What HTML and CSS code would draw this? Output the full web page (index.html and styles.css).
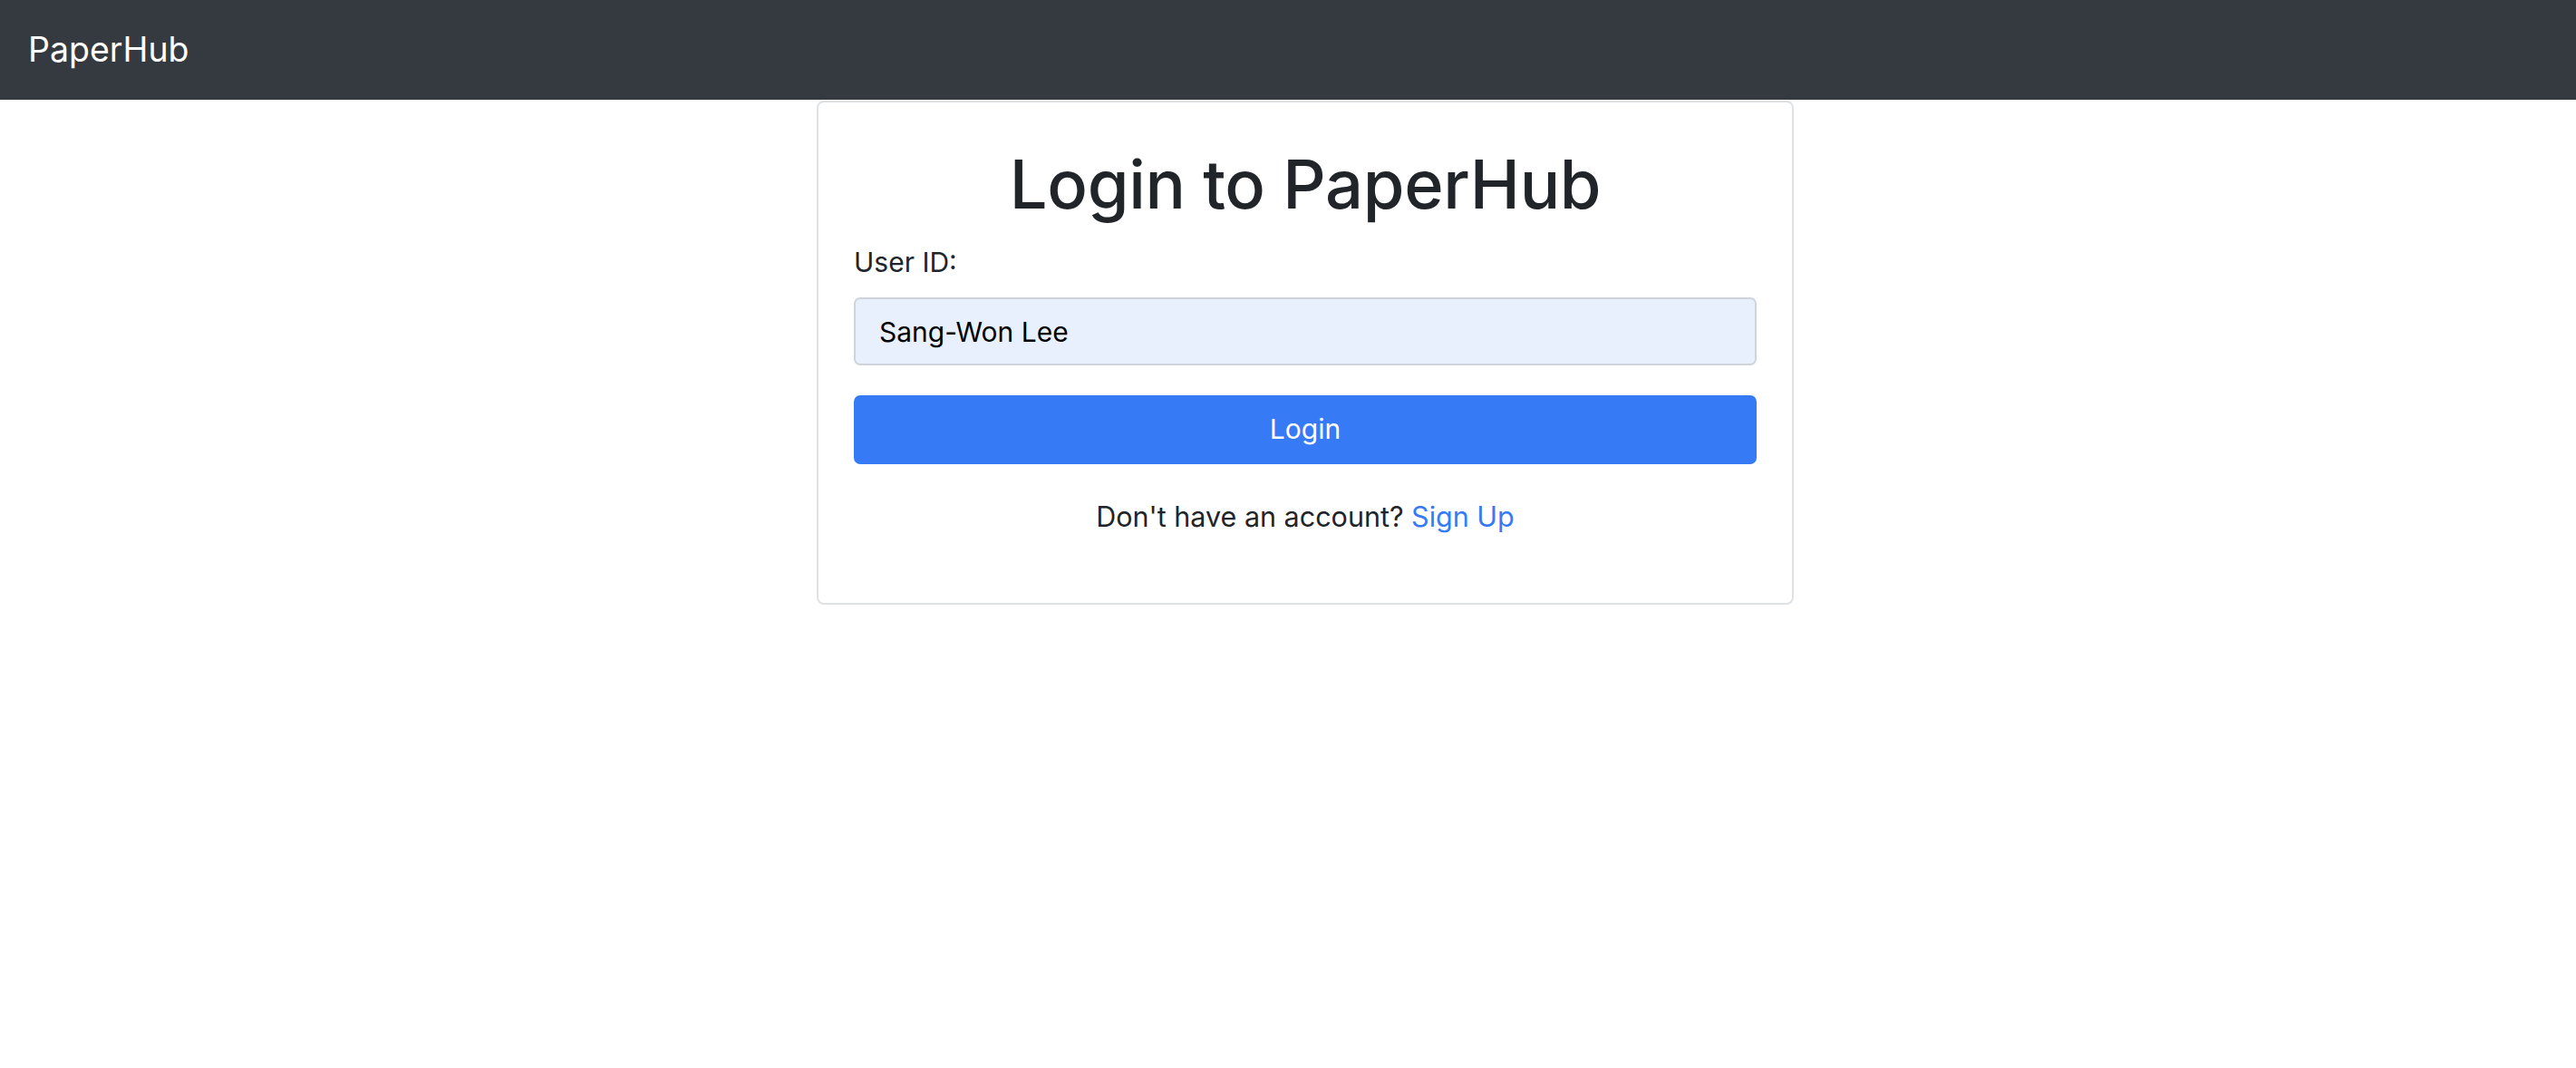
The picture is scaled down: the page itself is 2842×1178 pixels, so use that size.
FILE: index.html
```html
<!DOCTYPE html>
<html lang="en">
<head>
<meta charset="utf-8">
<title>Login - PaperHub</title>
<link rel="stylesheet" href="styles.css">
</head>
<body>
  <nav class="navbar">
    <a class="brand" href="#">PaperHub</a>
  </nav>
  <main class="page">
    <section class="card">
      <h1 class="title">Login to PaperHub</h1>
      <form class="form">
        <label class="label" for="uid">User ID:</label>
        <input class="input" id="uid" type="text" value="Sang-Won Lee">
        <button class="btn" type="button">Login</button>
      </form>
      <p class="signup">Don't have an account? <a class="link" href="#">Sign Up</a></p>
    </section>
  </main>
</body>
</html>
```

FILE: styles.css
```css
* { box-sizing: border-box; }

html, body {
  margin: 0;
  padding: 0;
  background: #ffffff;
}

body {
  font-family: Inter, "Noto Sans", "Liberation Sans", sans-serif;
  color: #212529;
  font-size: 30px;
  line-height: 1.5;
}

.navbar {
  height: 110px;
  background: #343a40;
  display: flex;
  align-items: center;
  padding-left: 31px;
}

.brand {
  color: #ffffff;
  text-decoration: none;
  font-size: 37.5px;
  line-height: 1.5;
}

.page {
  display: flex;
  justify-content: center;
  padding-left: 38px;
  margin-top: 1px;
}

.card {
  width: 1078px;
  border: 2px solid #dfe2e5;
  border-radius: 8px;
  padding: 46px 39px 42px;
}

.title {
  margin: 0;
  text-align: center;
  font-size: 74px;
  font-weight: 500;
  line-height: 1.2;
  color: #212529;
  letter-spacing: -0.3px;
}

.form {
  display: flex;
  flex-direction: column;
}

.label {
  margin-top: 19px;
  display: block;
}

.input {
  margin-top: 16px;
  height: 75px;
  width: 100%;
  font: inherit;
  color: #000000;
  background: #e8f0fe;
  border: 2px solid #ced4da;
  border-radius: 7px;
  padding: 14px 26px 12px;
  outline: none;
}

.btn {
  margin-top: 33px;
  height: 76px;
  width: 100%;
  font: inherit;
  color: #ffffff;
  background: #377af5;
  border: none;
  border-radius: 7px;
  padding: 0;
  cursor: pointer;
}

.signup {
  margin: 35px 0 30px;
  text-align: center;
  font-size: 30.5px;
}

.link {
  color: #377af5;
  text-decoration: none;
}
```
